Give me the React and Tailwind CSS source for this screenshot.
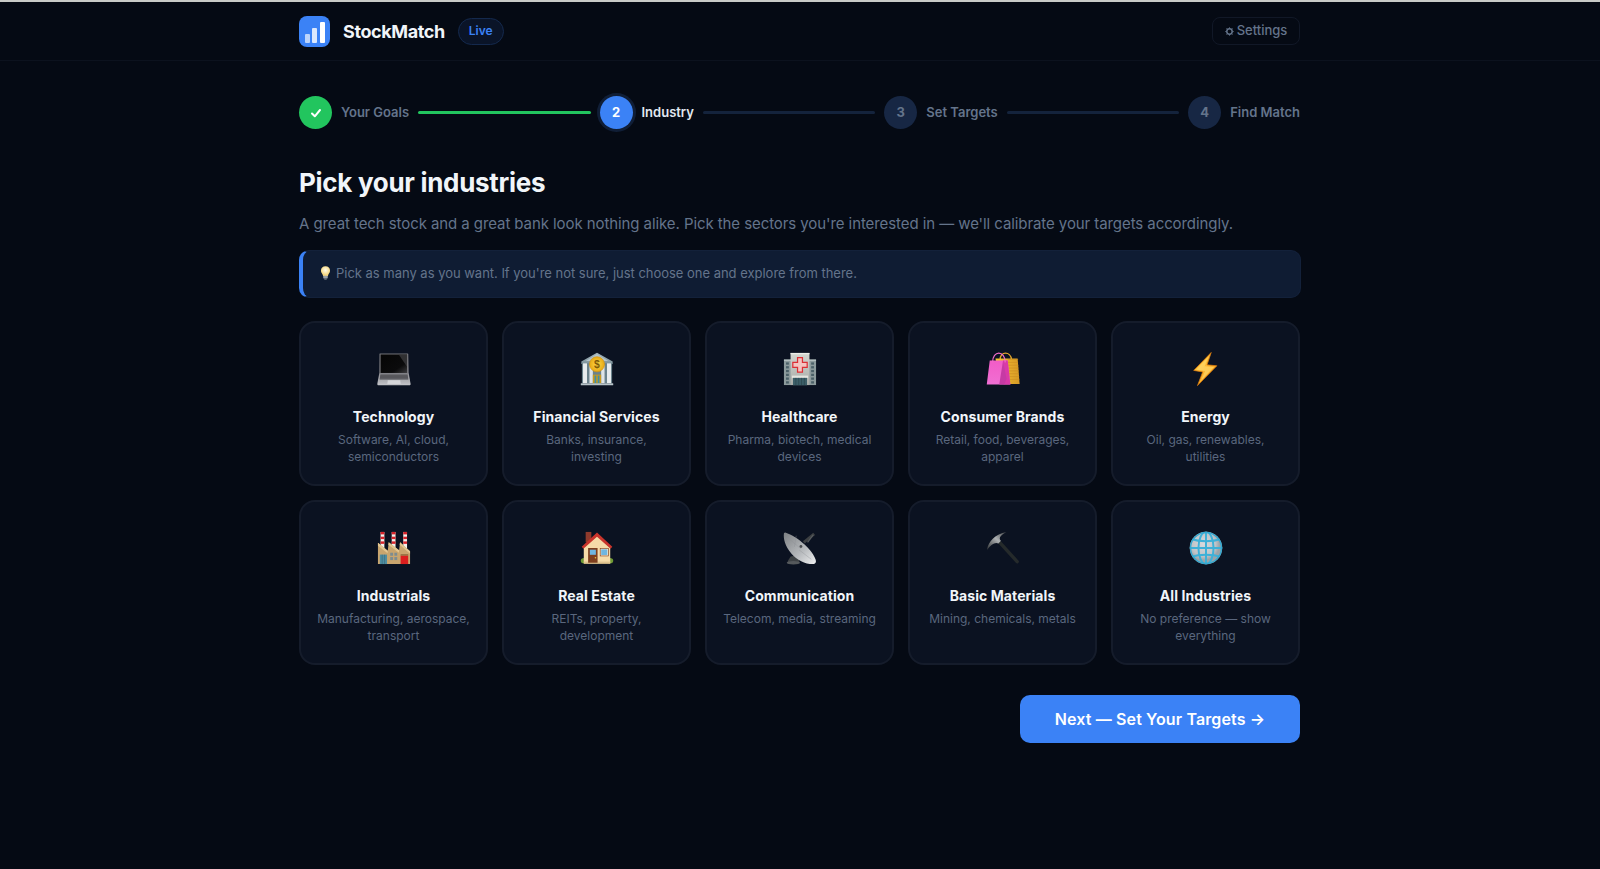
import React from "react";

const Laptop = () => (
  <svg viewBox="0 0 36 36" className="w-[34px] h-[34px]">
    <defs>
      <linearGradient id="lp1" x1="0" y1="0" x2="0" y2="1"><stop offset="0" stopColor="#8d8d92" /><stop offset="1" stopColor="#c4c5c9" /></linearGradient>
      <linearGradient id="lp2" x1="0" y1="0" x2="1" y2="1"><stop offset="0" stopColor="#050505" /><stop offset="0.7" stopColor="#0b0b0c" /><stop offset="1" stopColor="#3b3b3d" /></linearGradient>
    </defs>
    <path d="M3 1.5h29.5a.6.6 0 0 1 .6.6L33.6 23H2.4L2.6 2.1a.6.6 0 0 1 .4-.6z" fill="#77777c" />
    <path d="M3.8 2.6h28v19.6h-28z" fill="url(#lp2)" />
    <path d="M23 2.6h8.8v13z" fill="#3d3d40" opacity=".75" />
    <path d="M2.4 22.6h31.2l2 11.4c0 .8-.5 1.3-1.3 1.3H1.6c-.8 0-1.3-.5-1.3-1.3z" fill="url(#lp1)" />
    <path d="M3.6 23.8h28.8l.8 5.4H2.8z" fill="#4a4a4e" />
    <path d="M3.6 25.2h29M3.2 26.6h29.6M3 28h30" stroke="#8e8e92" strokeWidth=".35" />
    <path d="M11.4 30h13.2l.5 3.8H10.9z" fill="#d5d6d9" />
  </svg>
);

const Bank = () => (
  <svg viewBox="0 0 36 36" className="w-[34px] h-[34px]">
    <defs>
      <linearGradient id="bk1" x1="0" y1="0" x2="0" y2="1"><stop offset="0" stopColor="#a8b9c0" /><stop offset="1" stopColor="#7d929b" /></linearGradient>
      <radialGradient id="bk2"><stop offset="0" stopColor="#ffd94a" /><stop offset="1" stopColor="#e6a914" /></radialGradient>
    </defs>
    <path d="M18 .8L34.6 10v2.6H1.4V10z" fill="url(#bk1)" />
    <path d="M18 2.4L30 9.4H6z" fill="#b4c4ca" />
    <rect x="2" y="12" width="32" height="21" fill="#6b828c" />
    <rect x="3.2" y="12" width="4.2" height="21" fill="#e8ecee" />
    <rect x="10" y="14" width="3.6" height="19" fill="#dfe4e7" />
    <rect x="22.4" y="14" width="3.6" height="19" fill="#dfe4e7" />
    <rect x="28.6" y="12" width="4.2" height="21" fill="#e8ecee" />
    <rect x="13.6" y="24" width="8.8" height="9.5" fill="#c99a1e" />
    <rect x="15.4" y="25" width="1.8" height="8.5" fill="#3f8ea8" />
    <rect x="18.8" y="25" width="1.8" height="8.5" fill="#3f8ea8" />
    <rect x=".8" y="33" width="34.4" height="2.2" rx=".6" fill="#b8c4c9" />
    <circle cx="18" cy="13" r="8" fill="url(#bk2)" stroke="#d8950f" strokeWidth=".7" />
    <text x="18" y="17" textAnchor="middle" fontSize="11" fontWeight="700" fill="#7d5a07" fontFamily="Liberation Sans, sans-serif">$</text>
  </svg>
);

const Hospital = () => (
  <svg viewBox="0 0 36 36" className="w-[34px] h-[34px]">
    <defs>
      <linearGradient id="hs1" x1="0" y1="0" x2="0" y2="1"><stop offset="0" stopColor="#d4d6d0" /><stop offset="1" stopColor="#a9aca8" /></linearGradient>
    </defs>
    <rect x="1" y="8" width="34" height="27" fill="#8c9a9c" />
    <rect x="1" y="8" width="34" height="1.4" fill="#b8c2c2" />
    {[11, 15, 19, 23, 27, 31].map((y) => (
      <g key={y} fill="#4b6068">
        <rect x="3.2" y={y} width="3" height="2.4" />
        <rect x="29.8" y={y} width="3" height="2.4" />
      </g>
    ))}
    <rect x="8" y="1" width="20" height="34" fill="url(#hs1)" />
    <rect x="8" y="1" width="20" height="1.4" fill="#eceee9" />
    <path d="M15.4 6h5.2v5h5v5.2h-5v5h-5.2v-5h-5V11h5z" fill="#f4c4c0" stroke="#dc2f35" strokeWidth="1.3" />
    <rect x="9.4" y="25" width="17.2" height="2.4" fill="#e4e5e0" />
    <rect x="10.6" y="27.4" width="14.8" height="7.8" fill="#3c5e68" />
    <path d="M13.6 27.4v7.8M16.6 27.4v7.8M19.6 27.4v7.8M22.6 27.4v7.8" stroke="#23393f" strokeWidth=".5" />
  </svg>
);

const Bags = () => (
  <svg viewBox="0 0 36 36" className="w-[34px] h-[34px]">
    <defs>
      <linearGradient id="bg1" x1="0" y1="0" x2="1" y2="0"><stop offset="0" stopColor="#f7c531" /><stop offset="1" stopColor="#d69a26" /></linearGradient>
      <linearGradient id="bg2" x1="0" y1="0" x2="0" y2="1"><stop offset="0" stopColor="#f25cc6" /><stop offset="1" stopColor="#f06fd3" /></linearGradient>
    </defs>
    <path d="M15 8c0-9 11-9 12 0" fill="none" stroke="#e3a62c" strokeWidth="1.4" />
    <path d="M10 7h23.5L35.6 34H16z" fill="url(#bg1)" />
    <path d="M23 8h11M23 11h11M23 14h11.4M23 17h11.6M23 20h11.8M23 23h12M23 26h12.2M23 29h12.4" stroke="#c98a1f" strokeWidth=".6" />
    <path d="M.8 34.5L4 9h19l2.8 25.5z" fill="url(#bg2)" />
    <path d="M18 9h5l2.8 25.5-7-.2z" fill="#d93aa8" />
    <path d="M14 34.4l4-25 3.8 19-2.4 6z" fill="#c63aa4" />
    <path d="M7 11c0-13 13-13 13.4 0" fill="none" stroke="#ef6bc8" strokeWidth="1.3" />
  </svg>
);

const Bolt = () => (
  <svg viewBox="0 0 36 36" className="w-[34px] h-[34px]">
    <defs>
      <linearGradient id="bt1" x1="0" y1="0" x2="1" y2="1"><stop offset="0" stopColor="#ffd34d" /><stop offset="1" stopColor="#fb9a14" /></linearGradient>
    </defs>
    <path d="M23.5.5L5 19.5l9.5 1.6L9 35.6l20.5-21-10.4-1z" fill="url(#bt1)" stroke="#d8780a" strokeWidth=".8" strokeLinejoin="round" />
    <path d="M20.5 5L8 18.5l9 1.5-4 10 13.5-14-10-1z" fill="#ffe27a" opacity=".55" />
  </svg>
);

const Factory = () => (
  <svg viewBox="0 0 36 36" className="w-[34px] h-[34px]">
    {[3.8, 15.6, 27.8].map((x) => (
      <g key={x}>
        <rect x={x} y="1" width="4" height="17" fill="#f4f1ec" />
        <rect x={x} y="1" width="4" height="2.6" fill="#d8232a" />
        <rect x={x} y="6" width="4" height="2.6" fill="#d8232a" />
        <rect x={x} y="11" width="4" height="2.6" fill="#d8232a" />
      </g>
    ))}
    <path d="M1 35V12.5l10.4 8.5 1-9 11 8.5 1-8.5 10.6 9.5V35z" fill="#c9a56e" />
    <path d="M1 12.5l10.4 8.5-.2 2.6L1 15.5zM12.4 12l11 8.5-.2 2.4L12 14.5zM24.4 12L35 21.5V24L24 14.5z" fill="#e3c690" />
    <rect x="3" y="25" width="7.6" height="10" fill="#4f8da0" />
    <path d="M5.5 25v10M8 25v10" stroke="#2f5f70" strokeWidth=".5" />
    <g fill="#7d8c90"><rect x="14" y="23" width="3" height="3.2" /><rect x="18.4" y="23" width="3" height="3.2" /><rect x="14" y="27.6" width="3" height="3.2" /><rect x="18.4" y="27.6" width="3" height="3.2" /></g>
    <rect x="25" y="26" width="8" height="9" fill="#dc1f1f" />
    <rect x="25" y="24.6" width="8" height="1.4" fill="#8d6a3c" />
  </svg>
);

const House = () => (
  <svg viewBox="0 0 36 36" className="w-[34px] h-[34px]">
    <ellipse cx="4.4" cy="31.5" rx="3.6" ry="2.8" fill="#6f9a35" />
    <ellipse cx="31.6" cy="31.5" rx="3.6" ry="2.8" fill="#6f9a35" />
    <rect x="6" y="1" width="6" height="11" fill="#8f3a2c" />
    <path d="M18 4.8L4 17.5v16.5h28V17.5z" fill="#f6dba8" />
    <path d="M18 1.5L1.8 16.8l1.8 2L18 6l14.4 12.8 1.8-2z" fill="#c9342b" />
    <rect x="4" y="32.4" width="28" height="2.4" fill="#e0c48f" />
    <rect x="8.6" y="18" width="10" height="15.6" fill="#7e3f1e" />
    <rect x="10.4" y="19.8" width="6.4" height="5.4" fill="#6fb6e0" />
    <circle cx="16.4" cy="28.4" r=".8" fill="#f0c63c" />
    <rect x="21.4" y="18.4" width="8.6" height="8" fill="#fff3d8" stroke="#7e3f1e" strokeWidth=".7" />
    <rect x="22.4" y="19.4" width="6.6" height="6" fill="#6fb6e0" />
  </svg>
);

const Dish = () => (
  <svg viewBox="0 0 36 36" className="w-[34px] h-[34px]">
    <defs>
      <linearGradient id="ds1" x1="0" y1="0" x2="1" y2="1"><stop offset="0" stopColor="#7d8083" /><stop offset=".6" stopColor="#b9bcbf" /><stop offset="1" stopColor="#eff0f1" /></linearGradient>
    </defs>
    <path d="M8 27l-3 5 1 2.4c4 1.2 9 .8 11.2-1.4l-.2-3-3-4z" fill="#3e4245" />
    <ellipse cx="11" cy="33.6" rx="7" ry="1.8" fill="#55595c" />
    <path d="M22 12L33 3" stroke="#3c3f42" strokeWidth="3" />
    <path d="M26 12l6-8" stroke="#55595c" strokeWidth="1.4" />
    <path d="M1 2.4C.2 8 2 16 9 24c6 7 15 11.4 23.6 11 2-.6 2.8-2.4 2-4.6C32 21 16 6 2.4 1.6 1.8 1.6 1.2 1.8 1 2.4z" fill="url(#ds1)" />
    <path d="M5 7l14 12M14 5l-2 12M30 30L17 20" stroke="#8f9295" strokeWidth=".4" />
    <circle cx="19" cy="16.4" r="1.5" fill="#4a4d50" />
  </svg>
);

const Pick = () => (
  <svg viewBox="0 0 36 36" className="w-[34px] h-[34px]">
    <defs>
      <linearGradient id="pk1" x1="0" y1="1" x2="1" y2="0"><stop offset="0" stopColor="#2e3133" /><stop offset=".55" stopColor="#aeb1b3" /><stop offset="1" stopColor="#3a3d40" /></linearGradient>
    </defs>
    <path d="M13 10.5L33 32.5" stroke="#252a2b" strokeWidth="3.6" strokeLinecap="round" />
    <path d="M1 20C2.5 10.5 10 3.5 21.5 1 14 5.5 13.5 7.5 15.8 10.4l-2.6 2.8C9.6 11.4 5.5 14 1 20z" fill="url(#pk1)" />
  </svg>
);

const Globe = () => (
  <svg viewBox="0 0 36 36" className="w-[34px] h-[34px]">
    <defs>
      <radialGradient id="gb1" cx=".42" cy=".38"><stop offset="0" stopColor="#d8dadd" /><stop offset=".75" stopColor="#bfc3c7" /><stop offset="1" stopColor="#9ba3a8" /></radialGradient>
      <clipPath id="gb2"><circle cx="18" cy="18" r="17.2" /></clipPath>
    </defs>
    <circle cx="18" cy="18" r="17.2" fill="url(#gb1)" />
    <g clipPath="url(#gb2)" fill="none" stroke="#3eb1d8" strokeWidth="2.1">
      <ellipse cx="18" cy="18" rx="8" ry="17.2" />
      <path d="M18 0v36M0 18h36" />
      <path d="M2 8.5c9 3 23 3 32 0M2 27.5c9-3 23-3 32 0" />
      <circle cx="18" cy="18" r="16.6" strokeWidth="2" stroke="#35a8d0" />
    </g>
  </svg>
);

const Bulb = () => (
  <svg viewBox="0 0 12 16" className="w-[11px] h-[14px] shrink-0 -mt-[2px]">
    <defs>
      <radialGradient id="bb1" cx=".5" cy=".4"><stop offset="0" stopColor="#fffdf0" /><stop offset="1" stopColor="#f6d77e" /></radialGradient>
    </defs>
    <path d="M6 .4C2.8.4.8 2.6.8 5.3c0 2.4 2 3.4 2.5 6h5.4c.5-2.6 2.5-3.6 2.5-6C11.2 2.6 9.2.4 6 .4z" fill="url(#bb1)" />
    <rect x="3.4" y="11.2" width="5.2" height="3" rx=".8" fill="#9aa0a6" />
    <rect x="4.4" y="14" width="3.2" height="1.6" rx=".7" fill="#6f757b" />
  </svg>
);

const Gear = () => (
  <svg viewBox="0 0 12 12" className="w-[9px] h-[9px] shrink-0" fill="none" stroke="currentColor">
    <circle cx="6" cy="6" r="3.6" strokeWidth="2" />
    <path d="M6 .4v1.6M6 10v1.6M.4 6H2M10 6h1.6M2 2l1.2 1.2M8.8 8.8L10 10M2 10l1.2-1.2M8.8 3.2L10 2" strokeWidth="1.2" />
  </svg>
);

const cards = [
  [Laptop, "Technology", "Software, AI, cloud, semiconductors"],
  [Bank, "Financial Services", "Banks, insurance, investing"],
  [Hospital, "Healthcare", "Pharma, biotech, medical devices"],
  [Bags, "Consumer Brands", "Retail, food, beverages, apparel"],
  [Bolt, "Energy", "Oil, gas, renewables, utilities"],
  [Factory, "Industrials", "Manufacturing, aerospace, transport"],
  [House, "Real Estate", "REITs, property, development"],
  [Dish, "Communication", "Telecom, media, streaming"],
  [Pick, "Basic Materials", "Mining, chemicals, metals"],
  [Globe, "All Industries", "No preference — show everything"],
];

const Line = ({ done }) => (
  <div className={`flex-1 h-[3px] rounded-full ${done ? "bg-[#22c55e]" : "bg-[#14233c]"}`} />
);

const Step = ({ n, label, state }) => (
  <div className="flex items-center gap-[9px] shrink-0">
    <div
      className={
        state === "done"
          ? "w-[33px] h-[33px] rounded-full bg-[#22c55e] flex items-center justify-center text-white"
          : state === "active"
          ? "w-[33px] h-[33px] rounded-full bg-[#3b82f6] flex items-center justify-center text-white text-[13px] font-bold shadow-[0_0_0_3px_#101e36]"
          : "w-[33px] h-[33px] rounded-full bg-[#172744] flex items-center justify-center text-[#64748b] text-[13px] font-bold"
      }
    >
      {state === "done" ? (
        <svg viewBox="0 0 12 12" className="w-[12px] h-[12px]" fill="none" stroke="currentColor" strokeWidth="2" strokeLinecap="round" strokeLinejoin="round">
          <path d="M2 6.5l2.8 2.8L10 3" />
        </svg>
      ) : (
        n
      )}
    </div>
    <span className={`text-[13px] font-semibold leading-none ${state === "active" ? "text-[#e2e8f0]" : "text-[#64748b]"}`}>{label}</span>
  </div>
);

export default function App() {
  return (
    <div className="min-h-[869px] bg-[#050a14] font-['Inter',sans-serif]">
      <div className="h-[2px] bg-[#c9cbc8]" />
      <header className="h-[59px] border-b border-[#0c121e]">
        <div className="max-w-[1002px] mx-auto h-full flex items-center justify-between">
          <div className="flex items-center">
            <div className="w-[31px] h-[31px] rounded-[8px] bg-[#3b82f6] flex items-end justify-center gap-[2.5px] pb-[4px]">
              <div className="w-[5px] h-[9px] rounded-[1px] bg-[#bcd4fb]" />
              <div className="w-[5px] h-[15px] rounded-[1px] bg-[#dce8fd]" />
              <div className="w-[5px] h-[21px] rounded-[1px] bg-white" />
            </div>
            <span className="ml-[13px] text-[18px] font-bold text-[#f1f5f9] tracking-[-0.4px]">StockMatch</span>
            <span className="ml-[13px] h-[27px] px-[10px] flex items-center rounded-full border border-[#14294d] bg-[#0a1428] text-[#3b82f6] text-[12px] font-semibold">Live</span>
          </div>
          <button className="h-[28px] w-[88px] mr-[1px] flex items-center justify-center gap-[3px] rounded-[8px] border border-[#111827] text-[#64748b] text-[13px] font-medium">
            <Gear />
            Settings
          </button>
        </div>
      </header>
      <main className="max-w-[1002px] mx-auto pt-[35px]">
        <div className="flex items-center gap-[9px] h-[33px] mr-[1px]">
          <Step label="Your Goals" state="done" />
          <Line done />
          <Step n="2" label="Industry" state="active" />
          <Line />
          <Step n="3" label="Set Targets" />
          <Line />
          <Step n="4" label="Find Match" />
        </div>
        <h1 className="mt-[36px] text-[26px] leading-[36px] font-bold text-[#f1f5f9] tracking-[-0.3px]">Pick your industries</h1>
        <p className="mt-[11px] text-[15px] leading-[24px] text-[#64748b] tracking-[-0.08px]">
          A great tech stock and a great bank look nothing alike. Pick the sectors you're interested in — we'll calibrate your targets accordingly.
        </p>
        <div className="mt-[14px] h-[48px] rounded-[10px] border border-[#13213a] border-l-[4px] border-l-[#3b82f6] bg-[#0f1c33] flex items-center gap-[5px] pl-[17px] text-[13px] text-[#64748b] tracking-[-0.02px]">
          <Bulb />
          <span>Pick as many as you want. If you're not sure, just choose one and explore from there.</span>
        </div>
        <div className="mt-[23px] mr-[1px] grid grid-cols-5 gap-[14px]">
          {cards.map(([Icon, title, desc]) => (
            <div key={title} className="h-[165px] rounded-[16px] border-2 border-[#151c2b] bg-[#0b1221] flex flex-col items-center pt-[28px] px-[16px] text-center">
              <div className="w-[36px] h-[36px] flex items-center justify-center"><Icon /></div>
              <div className="mt-[19px] text-[14px] leading-[22px] font-bold text-[#f1f5f9] whitespace-nowrap tracking-[0.08px]">{title}</div>
              <div className="mt-[4px] text-[12px] leading-[16.5px] text-[#5a677e]">{desc}</div>
            </div>
          ))}
        </div>
        <div className="mt-[30px] flex justify-end">
          <button className="w-[280px] h-[48px] mr-[1px] rounded-[10px] bg-[#3b82f6] text-white text-[16px] font-semibold tracking-[0.12px]">Next — Set Your Targets →</button>
        </div>
      </main>
    </div>
  );
}
